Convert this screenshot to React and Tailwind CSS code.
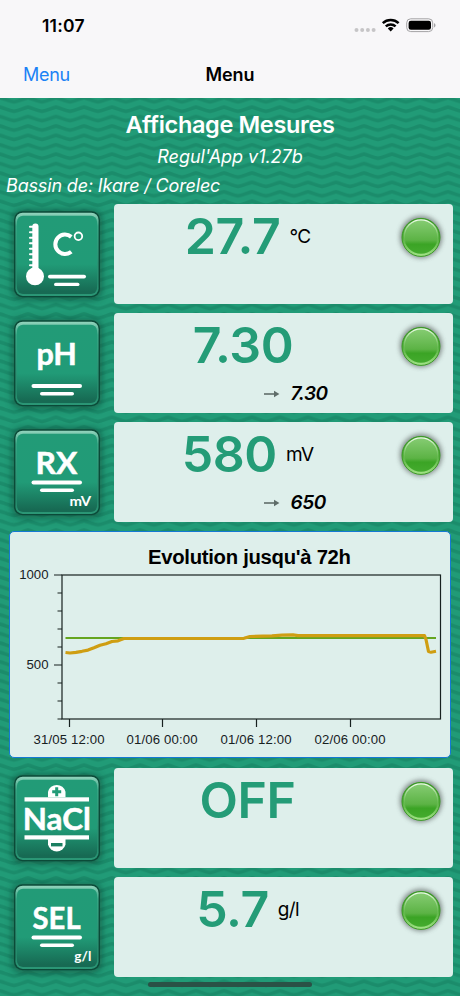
const SERIES =
  "55.5,121 60,121.5 66,120.8 72,119.8 78,118.6 84,116.3 90,113.8 96,112.3 102,110 108,109.3 114,107 234,106.8 240,105 262,104.4 272,103.6 283,103.4 288,104.2 414.5,104.2 416,108 418.5,120 421,120.7 426,119.8";

const X_TICKS = [
  { x: 59.5, label: "31/05 12:00" },
  { x: 152.5, label: "01/06 00:00" },
  { x: 246.5, label: "01/06 12:00" },
  { x: 340.5, label: "02/06 00:00" },
];

const MINOR_TICKS = [61.5, 79.5, 97.5, 115.5, 151.5, 169.5, 187.5];

function Waves() {
  return (
    <svg className="absolute inset-0 h-full w-full" aria-hidden="true">
      <defs>
        <pattern id="waves" width="28" height="9.4" patternUnits="userSpaceOnUse">
          <rect width="28" height="9.4" fill="#219b77" />
          <g fill="none" stroke="#1b8c6b" strokeWidth="3.6">
            <path d="M-2 -6 C1 -6 11 -1.6 14 -1.6 S27 -6 30 -6" />
            <path d="M-2 3.4 C1 3.4 11 7.8 14 7.8 S27 3.4 30 3.4" />
            <path d="M-2 12.8 C1 12.8 11 17.2 14 17.2 S27 12.8 30 12.8" />
          </g>
        </pattern>
      </defs>
      <rect width="100%" height="100%" fill="url(#waves)" />
    </svg>
  );
}

function StatusBar() {
  return (
    <div className="flex h-[50px] items-center justify-between pl-[42px] pr-[24px] pt-[2px]">
      <span className="text-[17.5px] font-semibold tracking-[0.2px]">11:07</span>
      <svg className="-mt-[2px]" width="84" height="18" viewBox="0 0 84 18">
        <g fill="#c6c5c7">
          <circle cx="4.5" cy="14" r="2" />
          <circle cx="10.2" cy="14" r="2" />
          <circle cx="15.9" cy="14" r="2" />
          <circle cx="21.6" cy="14" r="2" />
        </g>
        <g fill="none" stroke="#000" strokeWidth="2.5">
          <path d="M30.8 7.2a11.6 11.6 0 0 1 15.8 0" />
          <path d="M33.8 10.4a7.2 7.2 0 0 1 9.8 0" />
        </g>
        <path d="M35.8 12.4a4.3 4.3 0 0 1 5.8 0l-2.9 3z" fill="#000" />
        <rect x="54.7" y="2.8" width="26" height="12.8" rx="4" fill="none" stroke="#a4a3a5" />
        <rect x="56.6" y="4.7" width="22.4" height="9" rx="2.3" fill="#000" />
        <path d="M82 7.2v4.2c2-.7 2-3.5 0-4.2z" fill="#a4a3a5" />
      </svg>
    </div>
  );
}

function Tile({ children }) {
  return (
    <svg
      className="h-[100px] w-[113.5px] shrink-0 overflow-visible font-[Lato,sans-serif] font-bold"
      viewBox="0 0 113.5 100"
      fill="#fff"
      stroke="none"
    >
      <defs>
        <linearGradient id="tile" x1="0" y1="0" x2="0" y2="1">
          <stop offset="0" stopColor="#229b77" />
          <stop offset="0.62" stopColor="#219b77" />
          <stop offset="0.97" stopColor="#176a53" />
        </linearGradient>
        <linearGradient id="rim" x1="0" y1="0" x2="0" y2="1">
          <stop offset="0" stopColor="#93d4bd" />
          <stop offset="0.16" stopColor="#35a583" />
          <stop offset="0.85" stopColor="#24896b" />
          <stop offset="1" stopColor="#2b9776" />
        </linearGradient>
        <filter id="soft" x="-20%" y="-20%" width="140%" height="140%">
          <feGaussianBlur stdDeviation="3.5" />
        </filter>
      </defs>
      <rect x="12" y="6" width="90" height="90" rx="9" fill="#07382a" opacity="0.5" filter="url(#soft)" />
      <rect x="14" y="7.3" width="86" height="86" rx="8.5" fill="#0b4a38" />
      <rect x="15.4" y="8.7" width="83.2" height="83.2" rx="7.3" fill="url(#rim)" />
      <rect x="17" y="11.7" width="80" height="78.2" rx="6" fill="url(#tile)" />
      {children}
    </svg>
  );
}

function Glyphs({ x, y, size = 31, width, children }) {
  return (
    <text
      x={x}
      y={y}
      fontSize={size}
      textLength={width}
      lengthAdjust="spacingAndGlyphs"
      stroke="#fff"
      strokeWidth={size > 20 ? 0.5 : 0}
    >
      {children}
    </text>
  );
}

function Bars({ y }) {
  return (
    <>
      <rect x="31.5" y={y} width="50.5" height="4" rx="2" />
      <rect x="40" y={y + 8} width="34" height="3.6" rx="1.8" />
    </>
  );
}

function ThermometerTile() {
  return (
    <Tile>
      <circle cx="35" cy="72.3" r="9" />
      <rect x="32.3" y="19.6" width="6.2" height="50" rx="3" />
      <g stroke="#fff" strokeWidth="2.1" strokeLinecap="round">
        <path d="M30 22.8h4M30 28.3h4M30 33.8h4M30 39.3h4M30 44.8h4M30 50.3h4M30 55.8h4M30 61.3h4" />
      </g>
      <path
        d="M71.3 32.9A9.7 9.7 0 1 0 71.3 47.7"
        fill="none"
        stroke="#fff"
        strokeWidth="4"
      />
      <circle cx="78.4" cy="32.3" r="3.8" fill="none" stroke="#fff" strokeWidth="1.8" />
      <rect x="48" y="70.7" width="38" height="3.8" rx="1.9" />
      <rect x="54" y="78.7" width="25.5" height="3.4" rx="1.7" />
    </Tile>
  );
}

function PhTile() {
  return (
    <Tile>
      <Glyphs x="36.4" y="52.3" width="40.5">pH</Glyphs>
      <Bars y={71} />
    </Tile>
  );
}

function RxTile() {
  return (
    <Tile>
      <Glyphs x="35.6" y="52" width="41.8">RX</Glyphs>
      <Bars y={58.5} />
      <Glyphs x="69.4" y="84" size={13} width="21.8">mV</Glyphs>
    </Tile>
  );
}

function SaltTile() {
  return (
    <Tile>
      <path d="M48 29.3v-5.5a9 9 0 0 1 17.5 0v5.5z" />
      <path d="M56.7 19.3v9M52.2 23.8h9" stroke="#219b77" strokeWidth="3" />
      <rect x="24.5" y="29.3" width="64.5" height="4.2" />
      <Glyphs x="22.8" y="61.7" width="68">NaCl</Glyphs>
      <rect x="24.5" y="67.3" width="64.5" height="4.2" />
      <path d="M48 71v5.5a9 9 0 0 0 17.5 0V71z" />
      <path d="M51 76.7h11.5" stroke="#1a7f61" strokeWidth="3.4" />
    </Tile>
  );
}

function SelTile() {
  return (
    <Tile>
      <Glyphs x="32.6" y="51.5" width="48">SEL</Glyphs>
      <Bars y={58.5} />
      <Glyphs x="74.3" y="84" size={13.5} width="17">g/l</Glyphs>
    </Tile>
  );
}

function Led() {
  return (
    <svg className="mt-[3px] h-[60px] w-[60px] shrink-0" viewBox="0 0 60 60">
      <defs>
        <linearGradient id="led-rim" x1="0" y1="0" x2="0" y2="1">
          <stop offset="0" stopColor="#3a9f24" />
          <stop offset="0.5" stopColor="#4dac37" />
          <stop offset="1" stopColor="#a5e58a" />
        </linearGradient>
        <linearGradient id="led-face" x1="0" y1="0" x2="0" y2="1">
          <stop offset="0" stopColor="#86cc73" />
          <stop offset="0.6" stopColor="#5cb345" />
          <stop offset="0.72" stopColor="#3ba425" />
          <stop offset="1" stopColor="#44ab2e" />
        </linearGradient>
        <linearGradient id="led-shine" x1="0" y1="0" x2="0" y2="1">
          <stop offset="0" stopColor="#f4fff0" />
          <stop offset="0.55" stopColor="#9bd887" stopOpacity="0.2" />
          <stop offset="0.8" stopColor="#8bd372" stopOpacity="0" />
        </linearGradient>
        <filter id="led-shadow" x="-30%" y="-30%" width="160%" height="160%">
          <feGaussianBlur stdDeviation="2.4" />
        </filter>
      </defs>
      <circle cx="30" cy="29.9" r="21" fill="#4c5251" opacity="0.65" filter="url(#led-shadow)" />
      <circle cx="30" cy="30.4" r="19" fill="url(#led-rim)" stroke="#3c9a26" />
      <circle cx="30" cy="29.8" r="16.9" fill="url(#led-face)" stroke="url(#led-shine)" strokeWidth="1.4" />
    </svg>
  );
}

function Measure({ tile, value, unit, target }) {
  return (
    <div className="flex h-[100px] w-[453px]">
      {tile}
      <div className="flex flex-1 rounded bg-[#deefeb]">
        <div className="w-[268px]">
          <div className="flex h-[66px] items-start justify-center">
            <span className="text-[50px] font-semibold leading-[65px] tracking-[-0.4px] text-[#249c77]">{value}</span>
            {unit !== undefined && (
              <span className="ml-[9px] text-[19px] leading-[65px] tracking-[-0.7px] text-black">{unit}</span>
            )}
          </div>
          {target && (
            <div className="flex items-center pl-[150px] pt-[3px]">
              <svg width="16" height="10" viewBox="0 0 16 10">
                <path d="M0 5h12" stroke="#5f6d69" strokeWidth="1.6" />
                <path d="M10 1.8 15.4 5 10 8.2z" fill="#5f6d69" />
              </svg>
              <span className="ml-[11px] text-[19px] font-semibold italic leading-6 tracking-[-0.4px]">{target}</span>
            </div>
          )}
        </div>
        <div className="ml-[9px]">
          <Led />
        </div>
      </div>
    </div>
  );
}

function Chart() {
  return (
    <div className="mx-[9px] h-[227px] w-[442px] overflow-hidden rounded-[5px] border border-[#1479d4] bg-[#deefeb]">
      <svg className="h-[225px] w-[440px] font-['Liberation_Sans',sans-serif]" viewBox="0 0.5 440 225">
        <text x="239.5" y="32" fontSize="20.3" fontWeight="bold" textAnchor="middle" textLength="203">
          Evolution jusqu'à 72h
        </text>
        <g fill="none" stroke="#17211f" strokeWidth="1.2">
          <rect x="52" y="43.5" width="378.5" height="144" />
          <path d="M44 43.5h8M44 133.5h8" />
          {MINOR_TICKS.map((y) => (
            <path key={y} d={`M47.5 ${y}h4.5`} />
          ))}
          {X_TICKS.map((t) => (
            <path key={t.x} d={`M${t.x} 187.5v8`} />
          ))}
        </g>
        <g fontSize="13.2" fill="#17211f">
          <text x="38.5" y="47.8" textAnchor="end">1000</text>
          <text x="38.5" y="137.8" textAnchor="end">500</text>
          {X_TICKS.map((t) => (
            <text key={t.label} x={t.x - 0.5} y="212.4" textAnchor="middle" textLength="71">
              {t.label}
            </text>
          ))}
        </g>
        <path d="M55.5 106.5H426" stroke="#65a51f" strokeWidth="2" />
        <polyline points={SERIES} fill="none" stroke="#cf9e12" strokeWidth="3.2" strokeLinejoin="round" />
      </svg>
    </div>
  );
}

export default function App() {
  return (
    <div className="relative flex h-[996px] w-[460px] flex-col overflow-hidden bg-[#219b77] font-[Inter,sans-serif] text-black">
      <Waves />
      <header className="relative h-[98px] bg-[#f8f7f9]">
        <StatusBar />
        <nav className="grid h-[48px] grid-cols-3 items-center px-[23px] text-[18px]">
          <span className="tracking-[-0.3px] text-[#1b82f5]">Menu</span>
          <span className="text-center font-semibold tracking-[-0.1px]">Menu</span>
        </nav>
      </header>

      <main className="relative flex flex-col">
        <div className="flex h-[106px] flex-col pt-[10px] text-white">
          <h1 className="text-center text-[23.5px] font-semibold leading-[34px] tracking-[-0.35px]">Affichage Mesures</h1>
          <p className="text-center text-[18px] italic leading-[30px] tracking-[-0.05px]">Regul'App v1.27b</p>
          <p className="pl-[6px] text-[18px] italic leading-[28px] tracking-[-0.15px]">Bassin de: Ikare / Corelec</p>
        </div>

        <section className="flex flex-col gap-[9px]">
          <Measure tile={<ThermometerTile />} value="27.7" unit="°C" />
          <Measure tile={<PhTile />} value="7.30" unit="" target="7.30" />
          <Measure tile={<RxTile />} value="580" unit="mV" target="650" />
          <Chart />
          <div className="mt-px flex flex-col gap-[9px]">
            <Measure tile={<SaltTile />} value="OFF" />
            <Measure tile={<SelTile />} value="5.7" unit="g/l" />
          </div>
        </section>
      </main>

      {/* home indicator */}
      <div className="absolute bottom-[9.5px] left-[148px] h-[5px] w-[164px] rounded-full bg-[#2a5146]" />
    </div>
  );
}
